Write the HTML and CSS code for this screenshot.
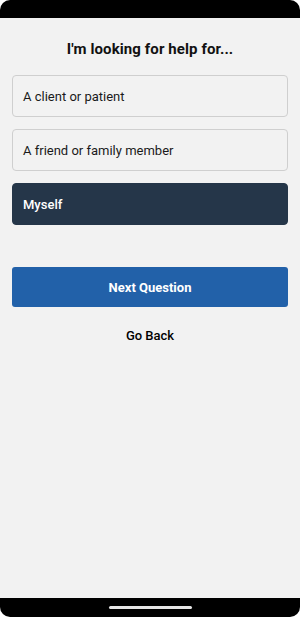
FILE: index.html
```html
<!DOCTYPE html>
<html lang="en">

<head>
    <meta charset="utf-8">
    <meta name="viewport" content="width=device-width, initial-scale=1.0">

    <title>Help for</title>

    <link rel="stylesheet" href="styles.css">

</head>

<body>
    <div class="phone">
        <div class="statusbar"></div>

        <main class="screen">
            <h1 class="title">I'm looking for help for...</h1>

            <div class="options">
                <button class="option">A client or patient</button>
                <button class="option">A friend or family member</button>
                <button class="option valgt">Myself</button>
            </div>

            <button class="next">Next Question</button>
            <button class="back">Go Back</button>
        </main>

        <div class="navbar">
            <span class="home"></span>
        </div>
    </div>
</body>

</html>
```

FILE: styles.css
```css
* {
    box-sizing: border-box;
}

body {
    margin: 0;
    background: #fff;
    font-family: Roboto, "Noto Sans", sans-serif;
}

.phone {
    display: flex;
    flex-direction: column;
    height: 617px;
}

.statusbar {
    height: 18px;
    background: #000;
    border-radius: 10px 10px 0 0;
}

.screen {
    flex: 1;
    background: #f2f2f2;
    padding: 0 12px;
    display: flex;
    flex-direction: column;
}

.title {
    margin: 22px 0 0;
    height: 18px;
    line-height: 18px;
    font-size: 15px;
    font-weight: 700;
    letter-spacing: 0.1px;
    text-align: center;
    color: #111;
}

.options {
    display: flex;
    flex-direction: column;
    gap: 12px;
    margin-top: 17px;
}

.option {
    height: 42px;
    padding: 0 10px;
    text-align: left;
    font-family: inherit;
    font-size: 13px;
    color: #1a1a1a;
    background: #f2f2f2;
    border: 1px solid #cfcfcf;
    border-radius: 4px;
}

.option.valgt {
    background: #253649;
    border-color: #253649;
    color: #fff;
    font-weight: 500;
}

.next {
    margin-top: 42px;
    height: 40px;
    background: #2261a9;
    border: none;
    border-radius: 3px;
    color: #fff;
    font-family: inherit;
    font-size: 13px;
    font-weight: 700;
}

.back {
    margin-top: 20px;
    background: none;
    border: none;
    font-family: inherit;
    font-size: 13px;
    font-weight: 500;
    color: #000;
    align-self: center;
}

.navbar {
    height: 19px;
    background: #000;
    border-radius: 0 0 10px 10px;
    display: flex;
    justify-content: center;
    padding-top: 8px;
}

.home {
    width: 83px;
    height: 3px;
    border-radius: 2px;
    background: #e6e6e6;
}
```
